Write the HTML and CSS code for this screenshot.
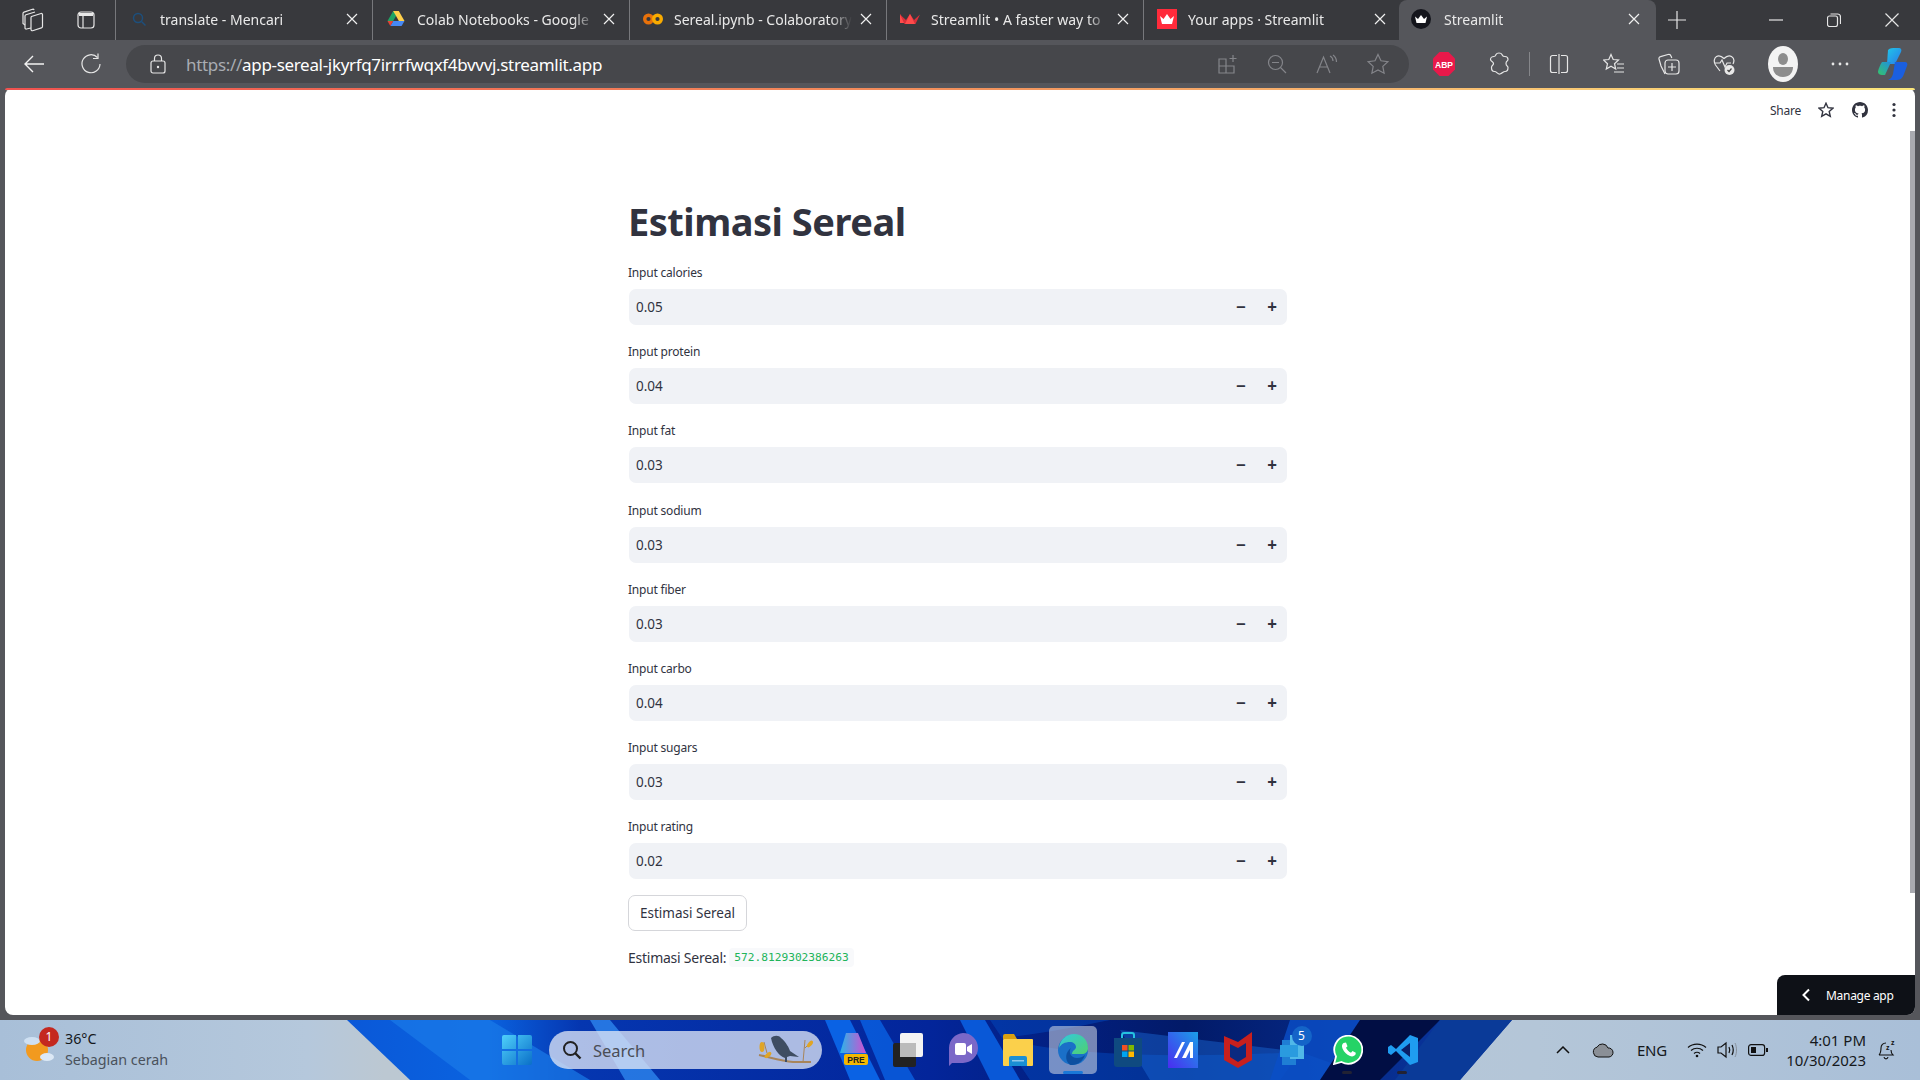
FILE: index.html
```html
<!DOCTYPE html>
<html lang="id">
<head>
<meta charset="utf-8">
<title>Streamlit</title>
<link rel="stylesheet" href="styles.css">
</head>
<body>
<div class="tabstrip">
  <div class="strip-tools">
    <svg class="ico" width="24" height="24" viewBox="0 0 24 24"><g class="ln"><path d="M10.500 8.500 20 5.500c.8-.2 1.500.3 1.500 1.100v11.800c0 .8-.4 1.300-1.100 1.500l-8.800 2.800c-.8.2-1.600-.3-1.600-1.100V9.700c0-.6.200-1 .5-1.200z"/><path d="M10 20 5.500 21c-.8.2-1.500-.3-1.500-1.100V8.200c0-.7.400-1.200 1-1.400L14 4"/><path d="M4 17 2 15.500V5.500c0-.7.400-1.200 1-1.400l8.500-2.800c.8-.2 1.300 0 1.600.6"/></g></svg>
    <svg class="ico" width="20" height="20" viewBox="0 0 20 20"><rect x="2" y="2" width="16" height="16" rx="3" class="ln"/><path d="M3 3h14v3H3z" fill="#e8e8e8"/><path d="M7 6v12" class="ln"/></svg>
  </div>
  <div class="tab">
    <svg class="fav" width="18" height="18" viewBox="0 0 18 18"><circle cx="8" cy="8" r="4.500" fill="none" stroke="#1d4f7c" stroke-width="1.500"/><path d="m11.500 11.500 4 4" stroke="#1d4f7c" stroke-width="1.500"/></svg>
    <span class="tab-title">translate - Mencari</span><svg class="close" width="12" height="12" viewBox="0 0 12 12"><path d="M1 1l10 10M11 1 1 11"/></svg>
  </div>
  <div class="tab">
    <svg class="fav" width="18" height="18" viewBox="0 0 18 18"><path d="M6.200 1h5.600l-5.600 10H.5z" fill="#1fa463"/><path d="M11.800 1 17.500 11h-5.600L6.200 1z" fill="#ffd04b"/><path d="M3.300 16 6.200 11h11.300l-2.900 5z" fill="#4688f4"/><path d="M.5 11h5.700l-2.900 5z" fill="#e94235"/></svg>
    <span class="tab-title">Colab Notebooks - Google</span><svg class="close" width="12" height="12" viewBox="0 0 12 12"><path d="M1 1l10 10M11 1 1 11"/></svg>
  </div>
  <div class="tab">
    <svg class="fav" width="20" height="18" viewBox="0 0 20 12"><circle cx="5.500" cy="6" r="3.800" fill="none" stroke="#e8710a" stroke-width="3.400"/><circle cx="14.500" cy="6" r="3.800" fill="none" stroke="#f9ab00" stroke-width="3.400"/></svg>
    <span class="tab-title">Sereal.ipynb - Colaboratory</span><svg class="close" width="12" height="12" viewBox="0 0 12 12"><path d="M1 1l10 10M11 1 1 11"/></svg>
  </div>
  <div class="tab">
    <svg class="fav" width="20" height="18" viewBox="0 0 20 18"><path d="M0 4 6 13H0z" fill="#ff4b4b"/><path d="M0 4.500 4.500 14h11L20 4.500 14 10 10 4 6 10z" fill="#d9303a"/><path d="M10 4 5 14h10z" fill="#ff4b4b"/></svg>
    <span class="tab-title">Streamlit • A faster way to</span><svg class="close" width="12" height="12" viewBox="0 0 12 12"><path d="M1 1l10 10M11 1 1 11"/></svg>
  </div>
  <div class="tab">
    <svg class="fav" width="20" height="20" viewBox="0 0 20 20"><rect width="20" height="20" fill="#ff2b3b"/><path d="M3 7l3.500 3L10 5l3.500 5L17 7l-2 8H5z" fill="#fff"/></svg>
    <span class="tab-title">Your apps · Streamlit</span><svg class="close" width="12" height="12" viewBox="0 0 12 12"><path d="M1 1l10 10M11 1 1 11"/></svg>
  </div>
  <div class="tab tab-active">
    <svg class="fav" width="20" height="20" viewBox="0 0 20 20"><circle cx="10" cy="10" r="10" fill="#14151c"/><path d="M4 7.500l3 2.500 3-4 3 4 3-2.500-1.500 6.500h-9z" fill="#fff"/></svg>
    <span class="tab-title">Streamlit</span><svg class="close" width="12" height="12" viewBox="0 0 12 12"><path d="M1 1l10 10M11 1 1 11"/></svg>
  </div>
  <div class="newtab"><svg width="20" height="20" viewBox="0 0 20 20"><path d="M10 1v18M1 10h18" class="ln"/></svg></div>
  <div class="winctl">
    <svg width="14" height="14" viewBox="0 0 14 14"><path d="M0 7h14" class="ln"/></svg>
    <svg width="14" height="14" viewBox="0 0 14 14"><rect x=".5" y="3" width="10" height="10.500" rx="2" class="ln"/><path d="M3.500 1h7a3 3 0 0 1 3 3v7" class="ln"/></svg>
    <svg width="14" height="14" viewBox="0 0 14 14"><path d="M.5.5l13 13M13.500.5l-13 13" class="ln"/></svg>
  </div>
</div>

<div class="toolbar">
  <svg class="nav-back" width="22" height="20" viewBox="0 0 22 20"><path d="M21 10H2M10 2l-8 8 8 8" class="ln-w"/></svg>
  <svg class="nav-reload" width="22" height="22" viewBox="0 0 22 22"><path d="M17.500 4.500A9 9 0 1 0 20 11" class="ln"/><path d="M18 .5v5h-5" class="ln"/></svg>
  <div class="omnibox">
    <svg class="lock" width="16" height="20" viewBox="0 0 16 20"><rect x="1" y="7" width="14" height="12" rx="2" class="ln"/><path d="M4.500 7V4.500a3.500 3.500 0 0 1 7 0V7" class="ln"/><circle cx="8" cy="13" r="1.200" fill="#e8e8e8"/></svg>
    <span class="url"><span class="url-dim">https://</span>app-sereal-jkyrfq7irrrfwqxf4bvvvj.streamlit.app</span>
    <div class="omni-tools">
      <svg width="20" height="20" viewBox="0 0 20 20"><path d="M1 5h7v14H1zM8 12h8v7H8zM1 12h7" class="ln-d"/><path d="M15 1v7M11.500 4.500h7" class="ln-d"/></svg>
      <svg width="20" height="20" viewBox="0 0 20 20"><circle cx="8.500" cy="8.500" r="7" class="ln-d"/><path d="M5 8.500h7M13.500 13.500 19 19" class="ln-d"/></svg>
      <svg width="22" height="20" viewBox="0 0 22 20"><path d="M1 19 7.500 3 14 19M3.500 13h8" class="ln-d"/><path d="M14 2c2 1 3 3 3 5M17 1c2 1.500 3.500 4 3.500 7" class="ln-d"/></svg>
      <svg width="22" height="22" viewBox="0 0 22 22"><path d="M11 1.500l3 6.300 6.800.9-5 4.700 1.300 6.800-6.100-3.300-6.100 3.300 1.300-6.800-5-4.700 6.800-.9z" class="ln-d"/></svg>
    </div>
  </div>
  <div class="ext-tools">
    <svg width="22" height="24" viewBox="0 0 22 24"><path d="M6.500 0h9L22 6.500v11L15.500 24h-9L0 17.500v-11z" fill="#e8194a"/><text x="11" y="15.500" class="abp">ABP</text></svg>
    <svg width="22" height="24" viewBox="0 0 22 24"><path d="M8 2.500c1-2 5-2 6 0 .5 1 .5 2 3 2 2.500 0 3 1 3 3 0 2-2 1-2 4s2 2 2 4c0 3-1 4-3 4s-2.500 2-5 2.500-3-2.500-5.500-2.500-3-1.500-3-4 2-2 2-4-3-2-3-4 2-3 3.500-3 1.500-1 2-2z" class="ln"/></svg>
    <i class="tool-sep"></i>
    <svg width="20" height="20" viewBox="0 0 20 20"><path d="M8 1.500H3.500a2 2 0 0 0-2 2v13a2 2 0 0 0 2 2H8M12 1.500h4.500a2 2 0 0 1 2 2v13a2 2 0 0 1-2 2H12M10 0v20" class="ln"/></svg>
    <svg class="t-fav" width="22" height="22" viewBox="0 0 22 22"><path d="M8 1.500l2.200 5 5.300.5-4 3.700 1.200 5.300L8 13.200 3.300 16l1.200-5.300-4-3.700 5.300-.5zM14 11h7M14 15h7M11 19h10" class="ln"/></svg>
    <svg width="22" height="24" viewBox="0 0 22 24"><path d="M7 22 3 14 1 7c-.3-1.200.3-2 1.500-2.300L10 2.500c1.500-.4 2.500 0 3 1.500l.8 2" class="ln"/><rect x="7" y="8" width="14" height="14" rx="3" class="ln"/><path d="M14 11v8M10 15h8" class="ln"/></svg>
    <svg width="22" height="24" viewBox="0 0 22 24"><path d="M7 19 2.500 13C.5 10 1 6 3.500 4.500c2.500-1.500 5-.5 7.500 2 2.500-2.500 5-3.500 7.500-2 2.300 1.500 3 4.500 1.500 7.500" class="ln"/><path d="M2 11h5l2-3 3 7 2-4h4" class="ln"/><circle cx="16.500" cy="18" r="5" fill="#e8e8e8"/><path d="m14.500 18 1.500 1.500 2.500-3" fill="none" stroke="#444" stroke-width="1.200"/></svg>
    <svg width="30" height="36" viewBox="0 0 30 36"><ellipse cx="15" cy="18" rx="15" ry="18" fill="#f3f3f3"/><ellipse cx="15" cy="13" rx="5" ry="6" fill="#8d8d8d"/><path d="M5 21h20c0 6-4 10-10 10S5 27 5 21z" fill="#8d8d8d"/></svg>
    <svg width="18" height="4" viewBox="0 0 18 4"><circle cx="2" cy="2" r="1.400" fill="#e8e8e8"/><circle cx="9" cy="2" r="1.400" fill="#e8e8e8"/><circle cx="16" cy="2" r="1.400" fill="#e8e8e8"/></svg>
    <svg class="t-copilot" width="30" height="32" viewBox="0 0 30 32"><defs><linearGradient id="cpA" x1="0" y1="0" x2="1" y2="1"><stop offset="0" stop-color="#1fc6e8"/><stop offset="1" stop-color="#2a7ae8"/></linearGradient><linearGradient id="cpB" x1="0" y1="1" x2="1" y2="0"><stop offset="0" stop-color="#35c46a"/><stop offset="1" stop-color="#1f8fe0"/></linearGradient></defs><path d="M10 2c2-2 4-2 8-2h3c2 0 3 2 2 4l-6 12H9z" fill="url(#cpA)"/><path d="M4 14C2 17 0 22 0 24c0 2 2 3 4 3h3l6-13z" fill="url(#cpB)"/><path d="M17 14h10c2 0 3 2 2 4l-3 8c-1 3-3 6-7 6h-9c3-1 4-3 5-6z" fill="#1a5fe0"/></svg>
  </div>
</div>

<div class="viewport">
  <div class="progress"></div>
  <main class="page">
    <div class="app-header">
      <span class="share">Share</span>
      <svg width="16" height="16" viewBox="0 0 16 16"><path d="M8 1.200l2 4.500 4.900.5-3.700 3.200 1.100 4.900L8 11.800l-4.300 2.500 1.100-4.900L1.100 6.200 6 5.700z" class="ln-dark"/></svg>
      <svg width="16" height="16" viewBox="0 0 16 16"><path fill="#31333f" d="M8 0C3.580 0 0 3.580 0 8c0 3.540 2.290 6.530 5.470 7.590.4.070.55-.17.55-.38 0-.19-.01-.82-.01-1.490-2.010.37-2.530-.49-2.690-.94-.09-.23-.48-.94-.82-1.130-.28-.15-.68-.52-.01-.53.63-.01 1.080.58 1.230.82.720 1.210 1.870.870 2.330.660.070-.520.280-.870.510-1.070-1.780-.2-3.640-.89-3.640-3.950 0-.87.310-1.590.820-2.150-.08-.2-.36-1.020.08-2.120 0 0 .67-.21 2.200.82.640-.18 1.320-.27 2-.27s1.360.09 2 .27c1.530-1.040 2.200-.82 2.200-.82.440 1.100.16 1.920.08 2.120.51.560.82 1.270.82 2.150 0 3.070-1.870 3.750-3.650 3.950.29.250.54.730.54 1.480 0 1.070-.01 1.930-.01 2.200 0 .21.150.46.550.38A8.010 8.010 0 0 0 16 8c0-4.420-3.580-8-8-8z"/></svg>
      <svg width="16" height="16" viewBox="0 0 16 16"><circle cx="8" cy="2.500" r="1.600" fill="#31333f"/><circle cx="8" cy="8" r="1.600" fill="#31333f"/><circle cx="8" cy="13.500" r="1.600" fill="#31333f"/></svg>
    </div>
    <div class="block">
      <h1 class="title">Estimasi Sereal</h1>
      <div class="field"><label class="label">Input calories</label><div class="num"><span class="val">0.05</span><span class="step">−</span><span class="step">+</span></div></div>
      <div class="field"><label class="label">Input protein</label><div class="num"><span class="val">0.04</span><span class="step">−</span><span class="step">+</span></div></div>
      <div class="field"><label class="label">Input fat</label><div class="num"><span class="val">0.03</span><span class="step">−</span><span class="step">+</span></div></div>
      <div class="field"><label class="label">Input sodium</label><div class="num"><span class="val">0.03</span><span class="step">−</span><span class="step">+</span></div></div>
      <div class="field"><label class="label">Input fiber</label><div class="num"><span class="val">0.03</span><span class="step">−</span><span class="step">+</span></div></div>
      <div class="field"><label class="label">Input carbo</label><div class="num"><span class="val">0.04</span><span class="step">−</span><span class="step">+</span></div></div>
      <div class="field"><label class="label">Input sugars</label><div class="num"><span class="val">0.03</span><span class="step">−</span><span class="step">+</span></div></div>
      <div class="field"><label class="label">Input rating</label><div class="num"><span class="val">0.02</span><span class="step">−</span><span class="step">+</span></div></div>
      <button class="btn">Estimasi Sereal</button>
      <p class="result">Estimasi Sereal: <code class="code">572.8129302386263</code></p>
    </div>
    <div class="scrollthumb"></div>
    <div class="manage"><svg width="10" height="14" viewBox="0 0 10 14"><path d="M8 1.500 2.500 7 8 12.500" fill="none" stroke="#fff" stroke-width="2"/></svg><span>Manage app</span></div>
  </main>
</div>

<footer class="taskbar">
  <svg class="wall" width="1920" height="60" viewBox="0 0 1920 60" preserveAspectRatio="none">
    <defs>
      <linearGradient id="wl" x1="0" y1="0" x2="1" y2="0"><stop offset="0" stop-color="#a8bfd8"/><stop offset=".16" stop-color="#b5c8dc"/><stop offset=".2" stop-color="#bcc8d2"/><stop offset=".8" stop-color="#b4c6d8"/><stop offset="1" stop-color="#a9bfd8"/></linearGradient>
      <linearGradient id="wb" x1="0" y1="0" x2="1" y2="0"><stop offset="0" stop-color="#0a58d8"/><stop offset=".12" stop-color="#0a63e0"/><stop offset=".2" stop-color="#0536b0"/><stop offset=".5" stop-color="#03259a"/><stop offset=".72" stop-color="#021a68"/><stop offset="1" stop-color="#0a3aa8"/></linearGradient>
    </defs>
    <rect width="1920" height="60" fill="url(#wl)"/>
    <polygon points="347,0 1512,0 1460,60 410,60" fill="url(#wb)"/>
    <polygon points="390,0 490,0 590,60 470,60" fill="#1a7ae8" opacity=".7"/>
    <polygon points="590,0 610,0 660,60 625,60" fill="#2d86ee" opacity=".8"/>
    <polygon points="825,0 850,0 880,60 850,60" fill="#0a62e4"/>
    <polygon points="860,0 880,0 915,60 885,60" fill="#0a62e4" opacity=".8"/>
    <polygon points="960,0 985,0 1020,60 990,60" fill="#0a62e4" opacity=".85"/>
    <path d="M990 0h120c-40 8-70 14-110 18 50 14 150 22 300 14l-20 28h-250l-40-60z" fill="#0446b8" opacity=".55"/>
    <polygon points="1120,10 1300,32 1380,60 1150,60" fill="#1a6ad8" opacity=".45"/>
    <polygon points="1290,0 1400,0 1330,60 1270,60" fill="#0a4fc8" opacity=".8"/>
    <polygon points="1360,0 1440,0 1380,60 1320,60" fill="#010e44"/>
    <polygon points="1440,0 1512,0 1460,60 1395,60" fill="#0a3a98"/>
  </svg>
  <div class="weather">
    <div class="wx-icon">
      <svg width="34" height="34" viewBox="0 0 34 34"><circle cx="14" cy="17" r="11" fill="#f29a1f"/><ellipse cx="9" cy="8" rx="8" ry="4" fill="#cfe0f2"/><ellipse cx="24" cy="24" rx="7" ry="4" fill="#dce8f5"/></svg>
      <span class="wx-badge">1</span>
    </div>
    <div class="wx-text"><span class="wx-temp">36°C</span><span class="wx-desc">Sebagian cerah</span></div>
  </div>
  <div class="apps">
    <svg class="app" width="30" height="30" viewBox="0 0 30 30"><defs><linearGradient id="win" x1="0" y1="0" x2="1" y2="1"><stop offset="0" stop-color="#4fd0fb"/><stop offset="1" stop-color="#0a6fc8"/></linearGradient></defs><path d="M0 2a2 2 0 0 1 2-2h12v14H0zM16 0h12a2 2 0 0 1 2 2v12H16zM0 16h14v14H2a2 2 0 0 1-2-2zM16 16h14v12a2 2 0 0 1-2 2H16z" fill="url(#win)"/></svg>
    <div class="search">
      <svg width="20" height="20" viewBox="0 0 20 20"><circle cx="8.500" cy="8.500" r="6.500" fill="none" stroke="#222" stroke-width="2"/><path d="m13 13 5.500 5.500" stroke="#222" stroke-width="2.400"/></svg>
      <span class="search-text">Search</span>
      <svg class="bird" width="58" height="36" viewBox="0 0 58 36"><path d="M2 23c10 2 22 6 34 7h18" fill="none" stroke="#a8855a" stroke-width="2"/><path d="M10 21 7 10M46 30l2-22M48 16l6-6" fill="none" stroke="#a8855a" stroke-width="1"/><ellipse cx="5" cy="15" rx="2.500" ry="5" fill="#e0a526"/><ellipse cx="11" cy="23" rx="2" ry="4" fill="#e0a526" transform="rotate(50 11 23)"/><ellipse cx="53" cy="12" rx="2" ry="4" fill="#e0a526" transform="rotate(40 53 12)"/><path d="M14 6c3-3 8-3 10 0 5 4 8 10 9 13l9 6-9-1-3 1v5h-2v-4c-6-2-12-10-14-20z" fill="#3f4d62"/></svg>
    </div>
    <div class="dock">
      <span class="cell"><svg width="30" height="34" viewBox="0 0 30 34"><defs><linearGradient id="pc" x1="0" y1="0" x2="1" y2="0"><stop offset="0" stop-color="#2bb5e8"/><stop offset="1" stop-color="#d14fd0"/></linearGradient></defs><path d="M8 0h12l8 20H2z" fill="url(#pc)"/><rect x="6" y="21" width="24" height="11" rx="2" fill="#f5b800"/><text x="18" y="30" class="pre">PRE</text></svg></span>
      <span class="cell"><svg width="30" height="34" viewBox="0 0 30 34"><rect y="10" width="23" height="24" rx="2" fill="#222"/><rect x="7" y="0" width="23" height="24" rx="2" fill="#f3f3f3"/><rect x="7" y="10" width="16" height="14" fill="#bbb"/></svg></span>
      <span class="cell"><svg width="30" height="34" viewBox="0 0 30 34"><path d="M15 0a15 15 0 0 1 0 30H4l-3 3V15A15 15 0 0 1 15 0z" fill="#7b68c8"/><rect x="7" y="10" width="11" height="12" rx="2" fill="#fff"/><path d="m19 14 5-3v10l-5-3z" fill="#fff"/></svg></span>
      <span class="cell"><svg width="30" height="32" viewBox="0 0 30 32"><path d="M0 2a2 2 0 0 1 2-2h9l3 5H0z" fill="#d9a010"/><rect y="5" width="30" height="27" rx="1" fill="#fbd04b"/><path d="M6 32V24a2 2 0 0 1 2-2h14a2 2 0 0 1 2 2v8z" fill="#1a8fd4"/><rect x="9" y="26" width="12" height="1.500" fill="#fff" opacity=".5"/></svg></span>
      <span class="cell cell-on"><svg width="30" height="32" viewBox="0 0 30 32"><defs><linearGradient id="eg" x1="0" y1="0" x2="1" y2="1"><stop offset="0" stop-color="#32c8e0"/><stop offset="1" stop-color="#4fd070"/></linearGradient></defs><circle cx="15" cy="16" r="15" fill="#1a70c8"/><path d="M1 14C2 5 9 0 16 0c8 0 14 6 14 14 0 4-3 6-6 6H14c0-4 4-4 4-7 0-3-3-5-6-5-5 0-9 2-11 6z" fill="url(#eg)"/><path d="M13 14c-3 4 0 10 6 10 3 0 6-1 8-3-2 6-7 10-13 10-1 0-2 0-3-1-4-4-4-12 2-16z" fill="#0d4fa0"/></svg><i class="running"></i></span>
      <span class="cell"><svg width="30" height="36" viewBox="0 0 30 36"><path d="M9 6V3a2 2 0 0 1 2-2h8a2 2 0 0 1 2 2v3" fill="none" stroke="#25c2e0" stroke-width="2"/><path d="M1 6h28v26a3 3 0 0 1-3 3H4a3 3 0 0 1-3-3z" fill="#0f4a80"/><rect x="9" y="13" width="5.500" height="5.500" fill="#f25022"/><rect x="15.500" y="13" width="5.500" height="5.500" fill="#7fba00"/><rect x="9" y="19.500" width="5.500" height="5.500" fill="#00a4ef"/><rect x="15.500" y="19.500" width="5.500" height="5.500" fill="#ffb900"/></svg></span>
      <span class="cell"><svg width="30" height="36" viewBox="0 0 30 36"><defs><linearGradient id="mg" x1="0" y1="1" x2="1" y2="0"><stop offset="0" stop-color="#4a2cf0"/><stop offset="1" stop-color="#1a9fe8"/></linearGradient></defs><rect width="30" height="36" fill="url(#mg)"/><path d="M6 26 14 10h3L9 26zM14 26l8-16h3v16h-3v-8l-4 8z" fill="#fff"/></svg></span>
      <span class="cell"><svg width="28" height="36" viewBox="0 0 28 36"><path d="M0 4 14 10 28 0v28L14 36 0 28z" fill="#c8201e"/><path d="M6 12l8 4 8-5v14l-8 5-8-5z" fill="#0a2a80"/></svg></span>
      <span class="cell"><span class="mail"><svg width="26" height="30" viewBox="0 0 26 30"><rect x="2" y="5" width="14" height="25" fill="#1f7ed4"/><rect x="10" y="0" width="14" height="24" fill="#50b8e8"/><rect y="10" width="18" height="12" fill="#2a9bdf"/></svg><span class="mail-badge">5</span></span></span>
      <span class="cell"><svg width="30" height="30" viewBox="0 0 30 30"><path d="M1 29l2-7.500A14 14 0 1 1 8.500 27z" fill="#25d366" stroke="#fff" stroke-width="1.800"/><path d="M10.500 8c-1.500 1-2 3-1 5.500 1.500 3.500 4 6 7.500 7.500 2.500 1 4.500 0 5.500-1.500l.3-1.800-3.300-1.700-1.500 1.800c-2-.8-4-2.800-5-5l1.500-1.500L13 7.500z" fill="#fff"/></svg><i class="tick"></i></span>
      <span class="cell"><svg width="30" height="30" viewBox="0 0 30 30"><path d="M22 0 8 14 3 10 0 12v6l3 2 5-4 14 14 8-3V3z" fill="#1f9cf0"/><path d="M22 8 13 15l9 7z" fill="#0a1f68"/></svg><i class="tick"></i></span>
    </div>
  </div>
  <div class="tray">
    <svg width="14" height="8" viewBox="0 0 14 8"><path d="M1 7l6-6 6 6" fill="none" stroke="#111" stroke-width="1.500"/></svg>
    <svg class="t-cloud" width="22" height="16" viewBox="0 0 22 16"><path d="M6 15a5 5 0 0 1-1-9.800A6 6 0 0 1 16 6a4.500 4.500 0 0 1 1 9z" fill="#8a8f96" stroke="#111" stroke-width="1"/></svg>
    <span class="t-lang">ENG</span>
    <svg class="t-wifi" width="20" height="16" viewBox="0 0 20 16"><path d="M1 5.500c5-4.500 13-4.500 18 0M4 8.500c3.500-3 8.500-3 12 0M7 11.500c1.800-1.500 4.200-1.500 6 0" fill="none" stroke="#111" stroke-width="1.200"/><circle cx="10" cy="14" r="1.300" fill="#111"/></svg>
    <svg class="t-vol" width="20" height="18" viewBox="0 0 20 18"><path d="M1 6h3l5-4v14l-5-4H1z" fill="none" stroke="#111" stroke-width="1.200"/><path d="M12 6c1 2 1 4 0 6M15 4c1.500 3 1.500 7 0 10" fill="none" stroke="#111" stroke-width="1.200"/><path d="M18 2c2 4 2 10 0 14" fill="none" stroke="#88909a" stroke-width="1"/></svg>
    <svg class="t-bat" width="20" height="12" viewBox="0 0 20 12"><rect x=".6" y=".6" width="16" height="10.800" rx="2.500" fill="none" stroke="#111" stroke-width="1.200"/><rect x="3" y="3" width="5" height="6" fill="#111"/><rect x="18" y="4" width="2" height="4" fill="#111"/></svg>
    <div class="clock"><span>4:01 PM</span><span>10/30/2023</span></div>
    <svg class="t-bell" width="20" height="22" viewBox="0 0 20 22"><path d="M2 16c2-2 2-4 2-7 0-3 2-5 5-5M2 16h14c-2-2-2-3-2-5M7 18c.5 2.500 3.500 2.500 4 0" fill="none" stroke="#111" stroke-width="1.100"/><text x="9" y="11" class="zz">z</text><text x="14" y="6" class="zz">z</text></svg>
  </div>
</footer>
</body>
</html>
```

FILE: styles.css
```css
* { box-sizing: border-box; }
html, body { margin: 0; padding: 0; }
body {
  width: 1920px;
  height: 1080px;
  overflow: hidden;
  display: flex;
  flex-direction: column;
  font-family: "Noto Sans", sans-serif;
  background: #55565b;
}

.ln { fill: none; stroke: #e6e6e6; stroke-width: 1.200; }
.ln-w { fill: none; stroke: #f2f2f2; stroke-width: 1.400; }
.ln-d { fill: none; stroke: #84858a; stroke-width: 1.200; }
.ln-dark { fill: none; stroke: #31333f; stroke-width: 1.400; }

/* Tab strip */
.tabstrip {
  height: 40px;
  display: flex;
  background: #38393d;
  color: #e9e9e9;
  flex: none;
}
.strip-tools {
  width: 115px;
  display: flex;
  align-items: center;
  padding-left: 21px;
  gap: 31px;
  flex: none;
}
.tab {
  width: 257px;
  flex: none;
  display: flex;
  align-items: center;
  padding: 0 0 2px 13px;
  font-size: 14px;
  border-left: 1px solid #77787c;
}
.tab .fav { width: 20px; flex: none; }
.tab-title {
  margin-left: 11px;
  width: 178px;
  white-space: nowrap;
  overflow: hidden;
  -webkit-mask-image: linear-gradient(to right, #000 88%, transparent);
  mask-image: linear-gradient(to right, #000 88%, transparent);
}
.close { margin-left: 8px; flex: none; fill: none; stroke: #f0f0f0; stroke-width: 1.200; }
.tab-active {
  background: #55565b;
  border-left: 0;
  border-radius: 8px 8px 0 0;
  margin-left: -1px;
  padding-left: 12px;
}
.tab-active .tab-title { margin-left: 13px; }
.tab-active .close { margin-left: 6px; }
.newtab { width: 42px; display: flex; align-items: center; justify-content: center; flex: none; }
.winctl { margin-left: auto; display: flex; align-items: center; gap: 44px; padding-right: 21px; }

/* Toolbar */
.toolbar {
  height: 48px;
  flex: none;
  display: flex;
  align-items: center;
  background: #55565b;
  padding-left: 23px;
}
.nav-reload { margin-left: 35px; }
.omnibox {
  margin-left: 24px;
  width: 1283px;
  height: 38px;
  flex: none;
  background: #46474b;
  border-radius: 19px;
  display: flex;
  align-items: center;
  padding-left: 24px;
}
.url { margin-left: 20px; font-size: 17px; letter-spacing: -.32px; color: #fff; white-space: nowrap; }
.url-dim { color: #a9acb2; }
.omni-tools { margin-left: auto; display: flex; align-items: center; gap: 29px; padding-right: 20px; }
.ext-tools { margin-left: 24px; display: flex; align-items: center; flex: 1; gap: 33px; }
.tool-sep { width: 1px; height: 24px; background: #85868a; margin: 0 -14px; }
.t-fav { margin-left: 1px; }
.t-copilot { margin-left: -4px; }
.abp { font: 700 8.500px "Liberation Sans", sans-serif; fill: #fff; text-anchor: middle; }

/* Viewport */
.viewport {
  flex: 1;
  min-height: 0;
  padding: 0 5px 5px;
  display: flex;
  flex-direction: column;
  background: #55565b;
}
.progress {
  height: 2px;
  flex: none;
  margin-bottom: -2px;
  border-radius: 8px 8px 0 0;
  background: linear-gradient(to right, #f0524f, #f2915c 50%, #f8b870 72%, #fbe77c);
  position: relative;
  z-index: 1;
}
.page {
  flex: 1;
  background: #fff;
  border-radius: 8px;
  position: relative;
  overflow: hidden;
  color: #31333f;
}
.app-header {
  position: absolute;
  top: 14px;
  right: 13px;
  display: flex;
  align-items: center;
  gap: 18px;
  height: 16px;
}
.share { font-size: 12px; letter-spacing: -.25px; margin-right: -1px; }
.block {
  margin-left: 623px;
  width: 659px;
  padding-top: 109px;
}
.title {
  margin: 0;
  height: 65px;
  font-size: 38px;
  line-height: 48px;
  font-weight: 700;
  letter-spacing: -.5px;
  color: #31333f;
}
.field { height: 79.200px; }
.label {
  display: block;
  height: 27px;
  font-size: 12px;
  line-height: 22px;
  letter-spacing: -.2px;
}
.num {
  margin-left: 1px;
  height: 36px;
  background: #f0f2f6;
  border-radius: 7px;
  display: flex;
  align-items: center;
  font-size: 13.500px;
}
.val { flex: 1; padding-left: 7px; }
.step { width: 30px; text-align: center; font-weight: 700; font-size: 17px; line-height: 20px; }
.step + .step { margin-left: 1px; }
.btn {
  display: block;
  width: 119px;
  height: 36px;
  margin-top: -1px;
  background: #fff;
  border: 1px solid #d5d6da;
  border-radius: 7px;
  color: #31333f;
  font-family: inherit;
  font-size: 13.500px;
  padding: 0;
}
.result {
  margin: 16px 0 0;
  font-size: 14px;
  line-height: 22px;
  letter-spacing: -.25px;
  display: flex;
  align-items: center;
}
.code {
  margin-left: 3px;
  background: #f8f9fb;
  border-radius: 4px;
  padding: 2px 5px;
  font-family: "DejaVu Sans Mono", monospace;
  font-size: 11.200px;
  letter-spacing: 0;
  line-height: 15px;
  color: #21b45a;
}
.scrollthumb {
  position: absolute;
  top: 43px;
  right: 0;
  width: 5px;
  height: 762px;
  background: #a9aab0;
}
.manage {
  position: absolute;
  right: 0;
  bottom: 0;
  width: 138px;
  height: 40px;
  background: #0e1117;
  border-radius: 8px 0 0 0;
  color: #fff;
  display: flex;
  align-items: center;
  padding-left: 24px;
  gap: 15px;
  font-size: 12px;
  letter-spacing: -.3px;
}

/* Taskbar */
.taskbar {
  height: 60px;
  flex: none;
  position: relative;
  display: flex;
  align-items: center;
  color: #15181c;
}
.wall { position: absolute; inset: 0; }
.weather, .apps, .tray { position: relative; }
.weather { display: flex; align-items: center; margin-left: 23px; width: 479px; flex: none; }
.wx-icon { width: 34px; height: 34px; position: relative; }
.wx-badge {
  position: absolute;
  left: 16px;
  top: -6px;
  width: 20px;
  height: 20px;
  border-radius: 50%;
  background: #c4281f;
  color: #fff;
  font-size: 12px;
  line-height: 20px;
  text-align: center;
}
.wx-text { display: flex; flex-direction: column; margin: -2px 0 0 8px; font-size: 14.300px; line-height: 21px; }
.wx-desc { color: #4a525c; }
.apps { display: flex; align-items: center; flex: none; }
.search {
  margin-left: 17px;
  width: 273px;
  height: 38px;
  border-radius: 19px;
  background: rgba(220, 228, 245, .78);
  display: flex;
  align-items: center;
  padding-left: 13px;
  color: #4a4d55;
  font-size: 16.500px;
}
.search-text { margin-left: 11px; }
.bird { margin-left: auto; margin-right: 7px; }
.dock { display: flex; align-items: center; margin-left: 3px; }
.cell {
  width: 55px;
  height: 48px;
  display: flex;
  align-items: center;
  justify-content: center;
  position: relative;
}
.cell-on { background: rgba(215, 220, 230, .55); border-radius: 5px; width: 48px; margin: 0 3.500px; }
.running { position: absolute; bottom: 0; left: 14px; width: 20px; height: 3px; border-radius: 2px; background: #1a78d8; }
.tick { position: absolute; bottom: 0; left: 22px; width: 10px; height: 3px; border-radius: 2px; background: #223; }
.mail { position: relative; display: block; height: 30px; }
.mail-badge {
  position: absolute;
  left: 12px;
  top: -9px;
  width: 20px;
  height: 20px;
  border-radius: 50%;
  background: #1464c8;
  color: #fff;
  font-size: 12px;
  line-height: 20px;
  text-align: center;
}
.pre { font: 700 8.500px "Liberation Sans", sans-serif; text-anchor: middle; fill: #222; }
.zz { font: 700 7px "Liberation Sans", sans-serif; fill: #111; }
.tray { margin-left: auto; display: flex; align-items: center; flex: none; padding-right: 23px; }
.t-cloud { margin-left: 22px; }
.t-lang { margin-left: 23px; width: 32px; font-size: 15px; letter-spacing: -.3px; }
.t-wifi { margin-left: 18px; }
.t-vol { margin-left: 10px; }
.t-bat { margin-left: 11px; }
.clock { margin-left: 15px; display: flex; flex-direction: column; align-items: flex-end; font-size: 15px; line-height: 20px; width: 83px; }
.t-bell { margin-left: 11px; }
```
